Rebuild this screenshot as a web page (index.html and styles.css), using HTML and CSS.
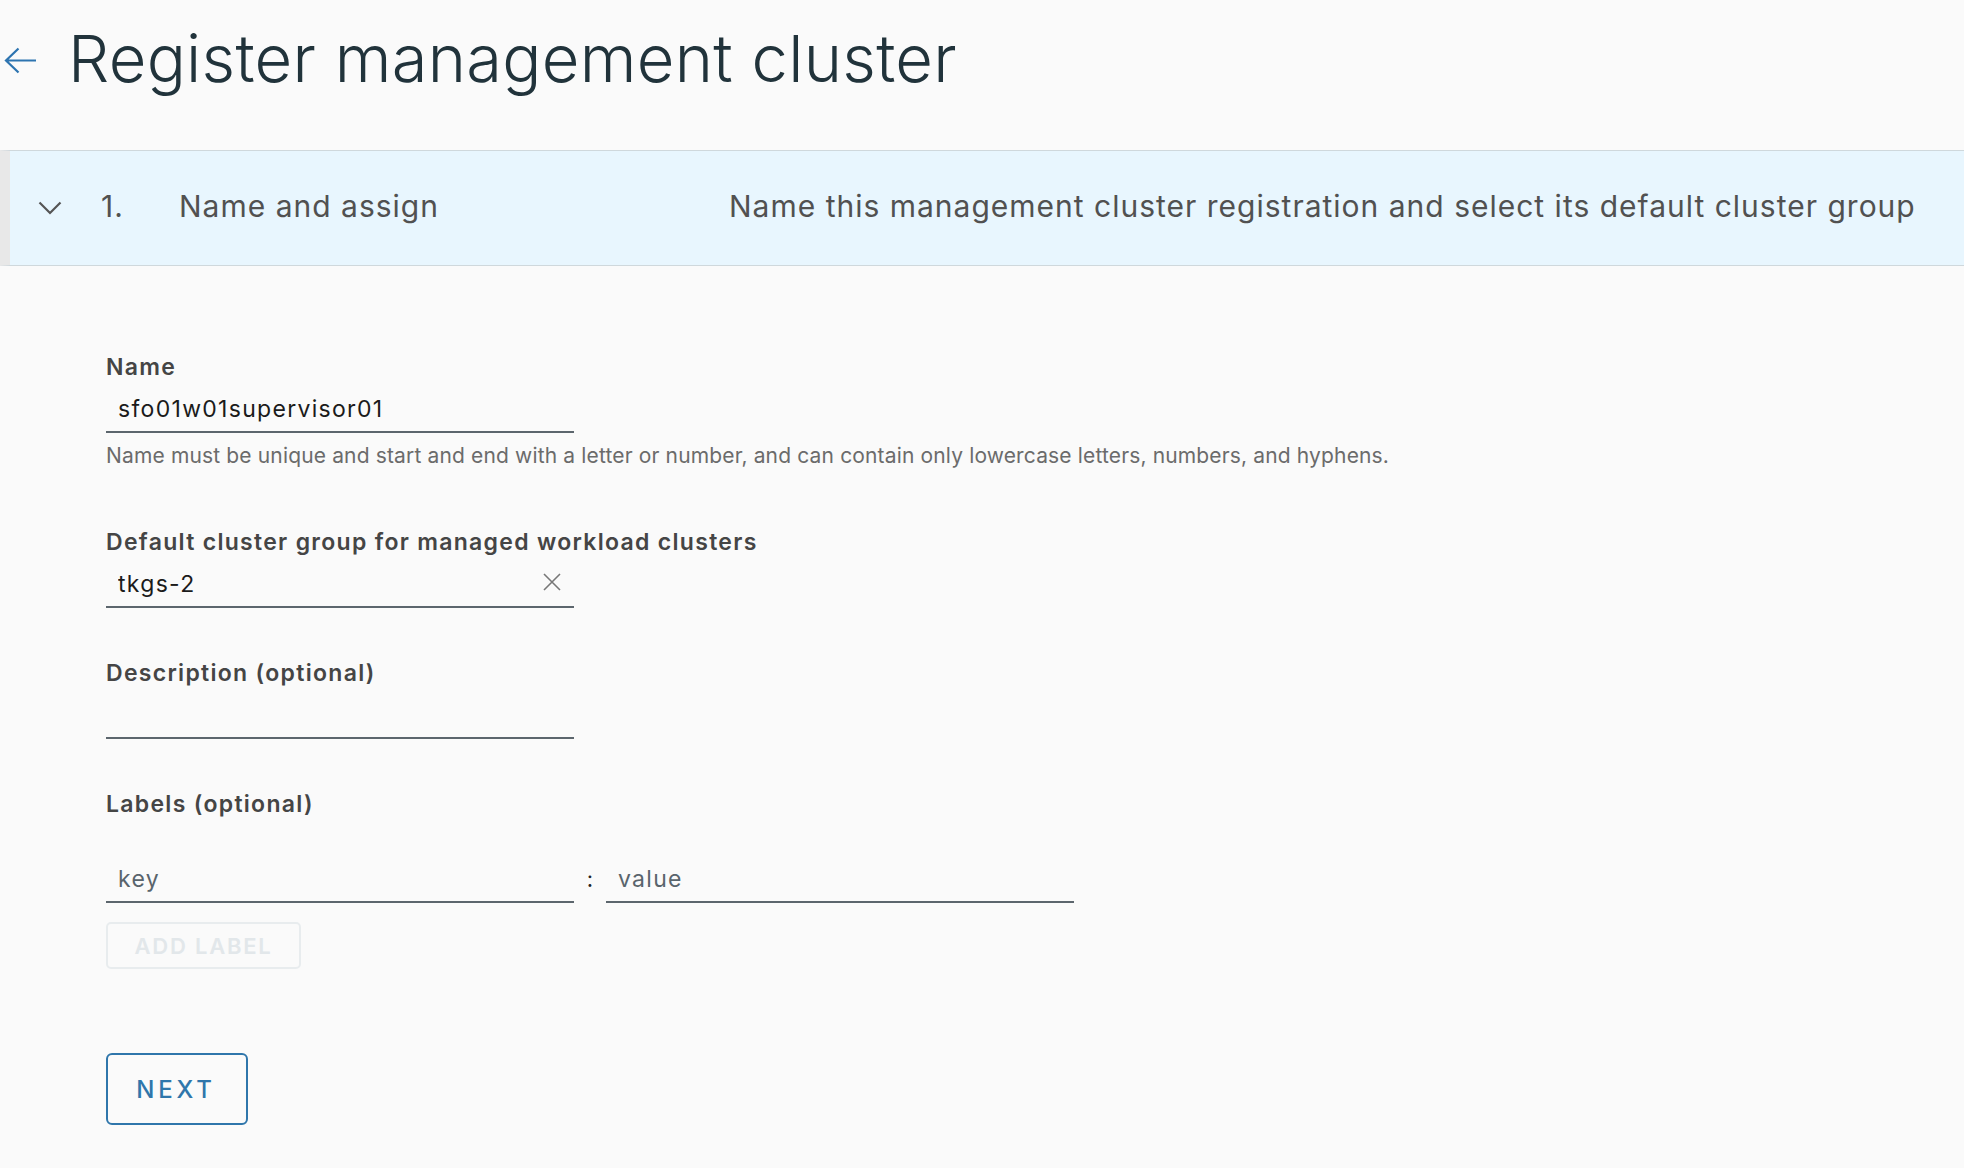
FILE: index.html
```html
<!DOCTYPE html>
<html lang="en">
<head>
<meta charset="utf-8">
<title>Register management cluster</title>
<link rel="stylesheet" href="styles.css">
</head>
<body>
<header class="page-head">
  <a class="back" href="#" aria-label="Back">
    <svg width="36" height="28" viewBox="0 0 36 28"><path d="M35 13.5H5M17.5 1.5L5 13.5L17.5 25.5" fill="none" stroke="currentColor" stroke-width="2.2"/></svg>
  </a>
  <h1 class="title">Register management cluster</h1>
</header>

<section class="stepper">
  <div class="step-head">
    <span class="chev"><svg width="24" height="14" viewBox="0 0 24 14"><path d="M1.5 1.5L12 12L22.5 1.5" fill="none" stroke="currentColor" stroke-width="2.2"/></svg></span>
    <span class="step-num">1.</span>
    <span class="step-title">Name and assign</span>
    <span class="step-desc">Name this management cluster registration and select its default cluster group</span>
  </div>

  <form class="step-body">
    <div class="field">
      <label class="label">Name</label>
      <div class="input-wrap"><input class="input" type="text" value="sfo01w01supervisor01"></div>
      <p class="helper">Name must be unique and start and end with a letter or number, and can contain only lowercase letters, numbers, and hyphens.</p>
    </div>

    <div class="field field-group">
      <label class="label">Default cluster group for managed workload clusters</label>
      <div class="input-wrap">
        <input class="input" type="text" value="tkgs-2">
        <span class="clear"><svg width="18" height="18" viewBox="0 0 18 18"><path d="M1 1L17 17M17 1L1 17" fill="none" stroke="currentColor" stroke-width="1.6"/></svg></span>
      </div>
    </div>

    <div class="field field-desc">
      <label class="label">Description (optional)</label>
      <div class="input-wrap"><input class="input" type="text" value=""></div>
    </div>

    <div class="field field-labels">
      <label class="label">Labels (optional)</label>
      <div class="kv">
        <div class="input-wrap"><input class="input" type="text" placeholder="key"></div>
        <span class="colon">:</span>
        <div class="input-wrap"><input class="input" type="text" placeholder="value"></div>
      </div>
      <button class="btn btn-disabled" type="button" disabled>ADD LABEL</button>
    </div>

    <button class="btn btn-next" type="button">NEXT</button>
  </form>
</section>
</body>
</html>
```

FILE: styles.css
```css
html, body {
  margin: 0;
  padding: 0;
  background: #fafafa;
}

body {
  font-family: Inter, Lato, "Noto Sans", sans-serif;
  width: 1964px;
  height: 1168px;
  overflow: hidden;
}

.page-head {
  display: flex;
  align-items: flex-start;
  padding: 20px 0 0 0;
  height: 150px;
  box-sizing: border-box;
}

.back {
  display: block;
  color: #2d74b0;
  width: 36px;
  height: 28px;
  margin: 27px 0 0 1px;
}

.back svg { display: block; }

.title {
  margin: 0 0 0 31px;
  font-size: 65px;
  line-height: 78px;
  font-weight: 300;
  letter-spacing: 0.3px;
  color: #21333b;
}

.stepper {
  display: block;
}

.step-head {
  display: flex;
  align-items: center;
  height: 110px;
  box-sizing: content-box;
  padding-bottom: 4px;
  background: #e8f6fe;
  border-top: 1px solid #cfd8dc;
  border-bottom: 1px solid #cfd8dc;
  border-left: 10px solid #e8e8e8;
  color: #515151;
  font-size: 30px;
  letter-spacing: 1px;
}

.chev {
  display: block;
  width: 24px;
  height: 14px;
  margin-left: 28px;
  margin-top: 3px;
  color: #555;
}

.chev svg { display: block; }

.step-num {
  margin-left: 39px;
  width: 78px;
}

.step-title {
  width: 550px;
}

.step-desc {
  white-space: nowrap;
}

.step-body {
  padding: 86px 0 0 106px;
}

.field {
  display: block;
}

.label {
  display: block;
  font-size: 23px;
  line-height: 30px;
  font-weight: 600;
  letter-spacing: 1.3px;
  color: #454545;
  margin-bottom: 11px;
}

.input-wrap {
  position: relative;
  width: 468px;
}

.input {
  display: block;
  width: 100%;
  box-sizing: border-box;
  height: 40px;
  padding: 0 12px 7px 12px;
  border: none;
  border-bottom: 2px solid #5c666d;
  background: transparent;
  font-family: inherit;
  font-size: 23px;
  letter-spacing: 1.3px;
  color: #1b1b1b;
  outline: none;
}

.input::placeholder {
  color: #59646c;
  opacity: 1;
}

.clear {
  position: absolute;
  right: 13px;
  top: 5px;
  width: 18px;
  height: 18px;
  color: #777;
}

.clear svg { display: block; }

.helper {
  margin: 9px 0 0 0;
  font-size: 21px;
  line-height: 28px;
  letter-spacing: 0.15px;
  color: #6b6b6b;
}

.field-group {
  margin-top: 57px;
}

.field-desc {
  margin-top: 50px;
}

.field-labels {
  margin-top: 50px;
}

.field-labels .label {
  margin-bottom: 40px;
}

.kv {
  display: flex;
  align-items: flex-end;
}

.colon {
  width: 32px;
  text-align: center;
  font-size: 22px;
  line-height: 40px;
  color: #222;
  padding-bottom: 4px;
}

.btn {
  display: block;
  box-sizing: border-box;
  background: transparent;
  font-family: inherit;
  text-transform: uppercase;
  cursor: pointer;
}

.btn-disabled {
  margin-top: 19px;
  width: 195px;
  height: 47px;
  border: 2px solid #e8ecee;
  border-radius: 5px;
  color: #e2e7ea;
  font-size: 22px;
  font-weight: 600;
  letter-spacing: 0.08em;
  cursor: default;
}

.btn-next {
  margin-top: 84px;
  width: 142px;
  height: 72px;
  border: 2px solid #2f76ab;
  border-radius: 6px;
  color: #2f76ab;
  font-size: 24px;
  font-weight: 500;
  letter-spacing: 0.16em;
  padding-left: 0.16em;
}
```
